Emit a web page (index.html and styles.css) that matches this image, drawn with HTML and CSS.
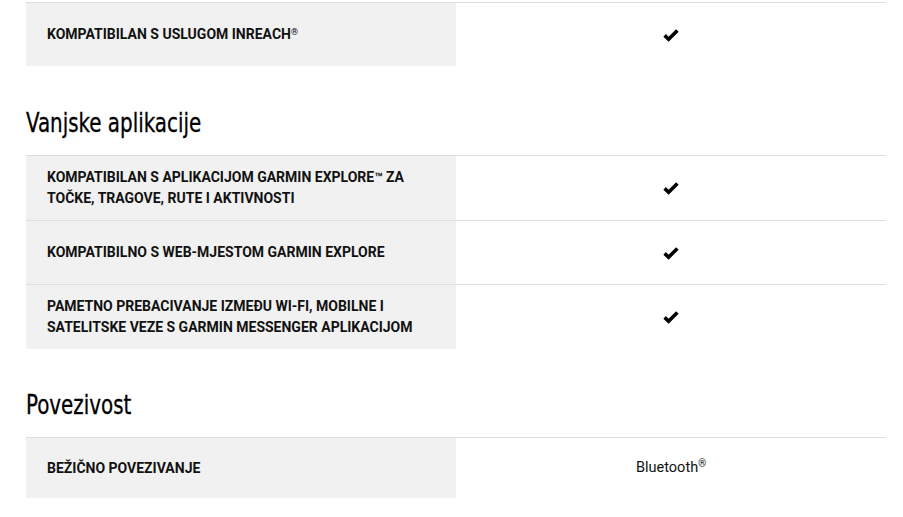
FILE: index.html
```html
<!DOCTYPE html>
<html lang="hr">
<head>
<meta charset="utf-8">
<title>Specifikacije</title>
<link rel="stylesheet" href="styles.css">
</head>
<body>
<main class="specs">
  <section class="spec-group spec-group--lead">
    <div class="spec-table">
      <div class="spec-row">
        <div class="spec-label"><span>KOMPATIBILAN S USLUGOM INREACH<sup>®</sup></span></div>
        <div class="spec-value"><svg class="check" viewBox="0 0 16 14" width="16" height="14" aria-label="da"><polyline points="1.6,7.4 5.6,11.2 14.4,2.4" /></svg></div>
      </div>
    </div>
  </section>

  <section class="spec-group">
    <h2 class="spec-title"><span>Vanjske aplikacije</span></h2>
    <div class="spec-table">
      <div class="spec-row">
        <div class="spec-label"><span>KOMPATIBILAN S APLIKACIJOM GARMIN EXPLORE<span class="tm">™</span> ZA TOČKE, TRAGOVE, RUTE I AKTIVNOSTI</span></div>
        <div class="spec-value"><svg class="check" viewBox="0 0 16 14" width="16" height="14" aria-label="da"><polyline points="1.6,7.4 5.6,11.2 14.4,2.4" /></svg></div>
      </div>
      <div class="spec-row">
        <div class="spec-label"><span>KOMPATIBILNO S WEB-MJESTOM GARMIN EXPLORE</span></div>
        <div class="spec-value"><svg class="check" viewBox="0 0 16 14" width="16" height="14" aria-label="da"><polyline points="1.6,7.4 5.6,11.2 14.4,2.4" /></svg></div>
      </div>
      <div class="spec-row">
        <div class="spec-label"><span>PAMETNO PREBACIVANJE IZMEĐU WI-FI, MOBILNE I SATELITSKE VEZE S GARMIN MESSENGER APLIKACIJOM</span></div>
        <div class="spec-value"><svg class="check" viewBox="0 0 16 14" width="16" height="14" aria-label="da"><polyline points="1.6,7.4 5.6,11.2 14.4,2.4" /></svg></div>
      </div>
    </div>
  </section>

  <section class="spec-group">
    <h2 class="spec-title"><span>Povezivost</span></h2>
    <div class="spec-table">
      <div class="spec-row">
        <div class="spec-label"><span>BEŽIČNO POVEZIVANJE</span></div>
        <div class="spec-value spec-value--text"><span>Bluetooth<sup>®</sup></span></div>
      </div>
    </div>
  </section>
</main>
</body>
</html>
```

FILE: styles.css
```css
html, body {
  margin: 0;
  padding: 0;
  background: #fff;
}

body {
  font-family: Roboto, "Liberation Sans", Arial, sans-serif;
  color: #111;
}

.specs {
  width: 860px;
  margin-left: 26px;
  padding-top: 2px;
}

.spec-title {
  margin: 0;
  padding-top: 40px;
  padding-bottom: 15px;
  font-family: "DejaVu Sans Condensed", "DejaVu Sans", sans-serif;
  font-stretch: condensed;
  font-weight: normal;
  font-size: 26px;
  line-height: 34px;
  color: #000;
}

.spec-title span {
  display: inline-block;
  transform: scaleX(0.85);
  transform-origin: left center;
  -webkit-text-stroke: 0.3px #000;
}

.spec-group:last-child .spec-title {
  padding-top: 39px;
}

.spec-row {
  display: grid;
  grid-template-columns: 430px 1fr;
  border-top: 1px solid #dedede;
}

.spec-label {
  background: #f1f1f1;
  padding: 11px 20px 11px 21px;
  font-weight: 700;
  font-size: 14px;
  line-height: 21px;
  display: flex;
  align-items: center;
  color: #111;
}

.spec-label sup {
  font-size: 9px;
  line-height: 0;
  vertical-align: 4px;
}

.spec-label .tm {
  font-size: 13px;
}

.spec-value {
  display: flex;
  align-items: center;
  justify-content: center;
  padding: 19px 0;
  min-height: 25px;
}

.spec-value--text {
  min-height: 22px;
  font-size: 14.5px;
  line-height: 22px;
  color: #111;
}

.spec-value--text sup {
  font-size: 10px;
  line-height: 0;
  vertical-align: 5px;
}

.check {
  display: block;
  fill: none;
  stroke: #000;
  stroke-width: 3.6;
  stroke-linecap: butt;
  stroke-linejoin: miter;
}
```
